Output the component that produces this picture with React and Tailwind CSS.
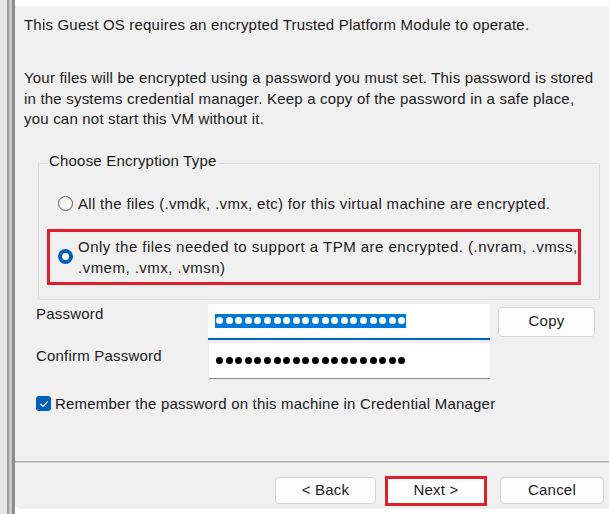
import React from "react";

function Radio({ checked }) {
  return checked ? (
    <span className="w-[15px] h-[15px] rounded-full bg-[#005fb8] flex items-center justify-center shrink-0">
      <span className="w-[7px] h-[7px] rounded-full bg-white" />
    </span>
  ) : (
    <span className="w-[15px] h-[15px] rounded-full border border-[#5c5c5c] bg-[#f7f7f7] shrink-0" />
  );
}

function Btn({ children, className = "" }) {
  return (
    <div
      className={
        "h-[27px] rounded-[4px] border border-[#d4d4d4] bg-[#fdfdfd] flex items-center justify-center text-[15px] text-[#1b1b1b] " +
        className
      }
    >
      {children}
    </div>
  );
}

function Dots({ white }) {
  return (
    <div className="flex items-center gap-[2.6px]">
      {Array.from({ length: 20 }).map((_, i) => (
        <span
          key={i}
          className={"w-[7px] h-[7px] rounded-full " + (white ? "bg-white" : "bg-black")}
        />
      ))}
    </div>
  );
}

export default function App() {
  return (
    <div className="w-[609px] h-[514px] bg-white flex overflow-hidden font-['Liberation_Sans',Arial,sans-serif] text-[15px] tracking-[0.2px] text-[#1a1a1a]">
      {/* left frame */}
      <div className="flex shrink-0 h-full">
        <div className="w-[7px] bg-[#e4e4e4]" />
        <div className="w-[2px] bg-[#9c9c9c]" />
        <div className="w-[3px] bg-[#c8c8c8]" />
        <div className="w-[3px] bg-[#8c8c8c]" />
      </div>
      <div className="flex-1 flex flex-col">
        <div className="h-[6px] bg-white shrink-0" />
        <div className="h-[503px] bg-[#f0f0f0] rounded-bl-[6px] flex flex-col">
          <div className="pl-[9px] whitespace-nowrap">
            <p className="mt-[9px] leading-[20px]">
              This Guest OS requires an encrypted Trusted Platform Module to operate.
            </p>
            <p className="mt-[33px] leading-[20.5px]">
              Your files will be encrypted using a password you must set. This password is stored
              <br />
              in the systems credential manager. Keep a copy of the password in a safe place,
              <br />
              you can not start this VM without it.
            </p>
          </div>

          {/* group box */}
          <div className="mt-[33px] ml-[23px] mr-[9px] h-[137px] border border-[#dcdcdc] rounded-[2px] relative flex flex-col">
            <div className="absolute left-[9px] -top-[13px] bg-[#f0f0f0] px-[1px] leading-[20px]">
              Choose Encryption Type
            </div>
            <div className="mt-[30px] ml-[19px] flex items-center gap-[5px] leading-[20px] whitespace-nowrap tracking-[0.32px]">
              <Radio checked={false} />
              <span>All the files (.vmdk, .vmx, etc) for this virtual machine are encrypted.</span>
            </div>
            <div className="mt-[15px] ml-[8px] w-[534px] h-[56px] border-[3px] border-[#e01f2d] flex items-start pl-[8px] pt-[5px] gap-[5px] whitespace-nowrap">
              <span className="mt-[12px]">
                <Radio checked={true} />
              </span>
              <span className="leading-[21px] -mt-[1px] tracking-[0.48px]">
                Only the files needed to support a TPM are encrypted. (.nvram, .vmss,
                <br />
                .vmem, .vmx, .vmsn)
              </span>
            </div>
          </div>

          {/* password rows */}
          <div className="mt-[4px] ml-[21px] flex items-start">
            <div className="w-[172px] leading-[20px]">Password</div>
            <div className="w-[282px] h-[36px] bg-white border-b-2 border-[#0067c0] flex items-center pl-[7px] shadow-[0_0_0_1px_#ececec]">
              <div className="bg-[#0078d7] h-[14px] px-[1px] flex items-center">
                <Dots white />
              </div>
            </div>
            <Btn className="ml-[8px] mt-[3px] w-[97px] h-[30px]">Copy</Btn>
          </div>
          <div className="mt-[3px] ml-[21px] flex items-start">
            <div className="w-[173px] pt-[3px] leading-[20px]">Confirm Password</div>
            <div className="w-[281px] h-[36px] bg-white border-b border-[#8a8a8a] flex items-center pl-[7px] shadow-[0_0_0_1px_#ececec]">
              <Dots />
            </div>
          </div>
          <div className="mt-[15px] ml-[21px] flex items-center gap-[4px] leading-[20px] whitespace-nowrap">
            <span className="w-[15px] h-[15px] rounded-[3px] bg-[#005fb8] flex items-center justify-center">
              <svg width="10" height="10" viewBox="0 0 10 10" fill="none">
                <path d="M1.8 5.2 L4 7.3 L8.3 2.8" stroke="white" strokeWidth="1.2" strokeLinecap="round" strokeLinejoin="round" />
              </svg>
            </span>
            <span>Remember the password on this machine in Credential Manager</span>
          </div>

          <div className="mt-[47px] h-[2px] bg-[#a8a8a8] border-b border-[#d8d8d8]" />

          <div className="mt-[13px] flex items-center justify-end pr-[5px]">
            <Btn className="w-[101px]">&lt; Back</Btn>
            <div className="ml-[9px] w-[102px] h-[30px] border-[3px] border-[#e01f2d] bg-[#fdfdfd] flex items-center justify-center text-[15px]">
              Next &gt;
            </div>
            <Btn className="ml-[13px] w-[104px]">Cancel</Btn>
          </div>
        </div>
      </div>
    </div>
  );
}
